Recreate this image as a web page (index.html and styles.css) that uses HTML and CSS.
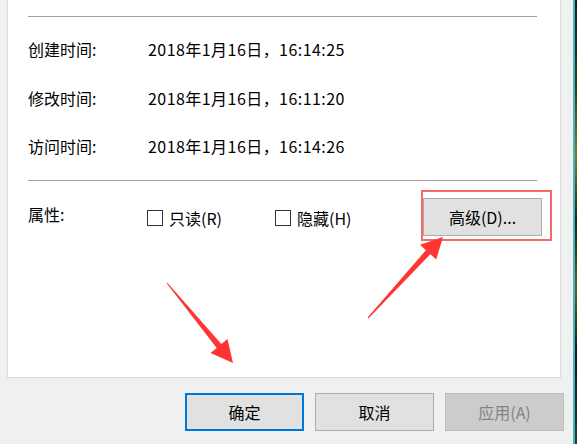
FILE: index.html
```html
<!DOCTYPE html>
<html lang="zh-CN">
<head>
<meta charset="utf-8">
<link rel="stylesheet" href="styles.css">
</head>
<body>
<div class="screen">
  <div class="window">
    <div class="panel">
      <div class="sep"></div>
      <div class="info">
        <div class="row"><span class="label">创建时间:</span><span class="val">2018年1月16日，16:14:25</span></div>
        <div class="row"><span class="label">修改时间:</span><span class="val">2018年1月16日，16:11:20</span></div>
        <div class="row"><span class="label">访问时间:</span><span class="val">2018年1月16日，16:14:26</span></div>
      </div>
      <div class="sep"></div>
      <div class="attrs">
        <span class="label attr-label">属性:</span>
        <span class="cb cb-ro"><span class="box"></span>只读(R)</span>
        <span class="cb cb-hide"><span class="box"></span>隐藏(H)</span>
        <div class="highlight"><button class="btn">高级(D)...</button></div>
      </div>
    </div>
    <div class="actions">
      <button class="btn primary">确定</button>
      <button class="btn">取消</button>
      <button class="btn disabled">应用(A)</button>
    </div>
  </div>
  <div class="wall"></div>
  <svg class="arrows" width="577" height="444" viewBox="0 0 577 444">
    <polygon fill="#ff3535" points="166.6,283.3 167.4,282.7 221.3,344.1 227.5,339 233,363 210.5,353 216.7,347.9"/>
    <polygon fill="#ff3535" points="367.6,317.6 368.4,318.4 430.3,254.2 436.2,259.6 443,237 420,244.8 425.9,250.2"/>
  </svg>
</div>
</body>
</html>
```

FILE: styles.css
```css
* { box-sizing: border-box; }
html, body { margin: 0; padding: 0; }
body {
  background: #f0f0f0;
  font-family: "Noto Sans CJK SC", "Microsoft YaHei", sans-serif;
  font-size: 16px;
  color: #000;
}
.screen {
  position: relative;
  width: 577px;
  height: 444px;
  display: flex;
  overflow: hidden;
}
.window {
  width: 575px;
  height: 444px;
  flex: none;
  background: #f0f0f0;
  border-right: 2px solid #3bb9cc;
  padding-left: 7px;
}
.wall {
  width: 2px;
  height: 444px;
  flex: none;
  background: linear-gradient(180deg, #1a1f0e 0%, #3b3a12 20%, #8a7a1c 35%, #20240d 50%, #6c5f19 65%, #14180b 80%, #2f3a22 100%);
}
.panel {
  width: 554px;
  height: 378px;
  background: #fff;
  border: 1px solid #dcdcdc;
  border-top: none;
  padding: 16px 23px 0 20px;
}
.sep {
  height: 1px;
  background: #a0a0a0;
}
.info {
  padding: 8px 0 9px;
}
.row {
  height: 48.5px;
  display: flex;
  align-items: center;
}
.label {
  width: 120px;
  flex: none;
}
.val {
  letter-spacing: 0.45px;
}
.attrs {
  height: 72px;
  display: flex;
  align-items: center;
}
.attrs > * { flex: none; }
.attr-label {
  width: 119px;
  margin-top: -6px;
}
.cb {
  display: flex;
  align-items: center;
  margin-top: 2px;
}
.cb-ro { width: 128px; }
.cb-hide { width: 146px; }
.box {
  width: 16px;
  height: 16px;
  border: 1px solid #333;
  background: #fff;
  margin-right: 6px;
}
.highlight {
  border: 2px solid #f26a6a;
  padding: 6px 8px 3px 0;
  margin-top: -2px;
}
.btn {
  width: 119px;
  height: 38px;
  background: #e1e1e1;
  border: 1px solid #adadad;
  font: inherit;
  color: #000;
  padding: 0;
  display: block;
}
.actions {
  display: flex;
  justify-content: flex-end;
  gap: 11px;
  padding-right: 9px;
  margin-top: 15px;
}
.btn.primary {
  border: 2px solid #0078d7;
}
.btn.disabled {
  background: #cccccc;
  border-color: #bfbfbf;
  color: #838383;
}
.arrows {
  position: absolute;
  left: 0;
  top: 0;
  pointer-events: none;
}
```
